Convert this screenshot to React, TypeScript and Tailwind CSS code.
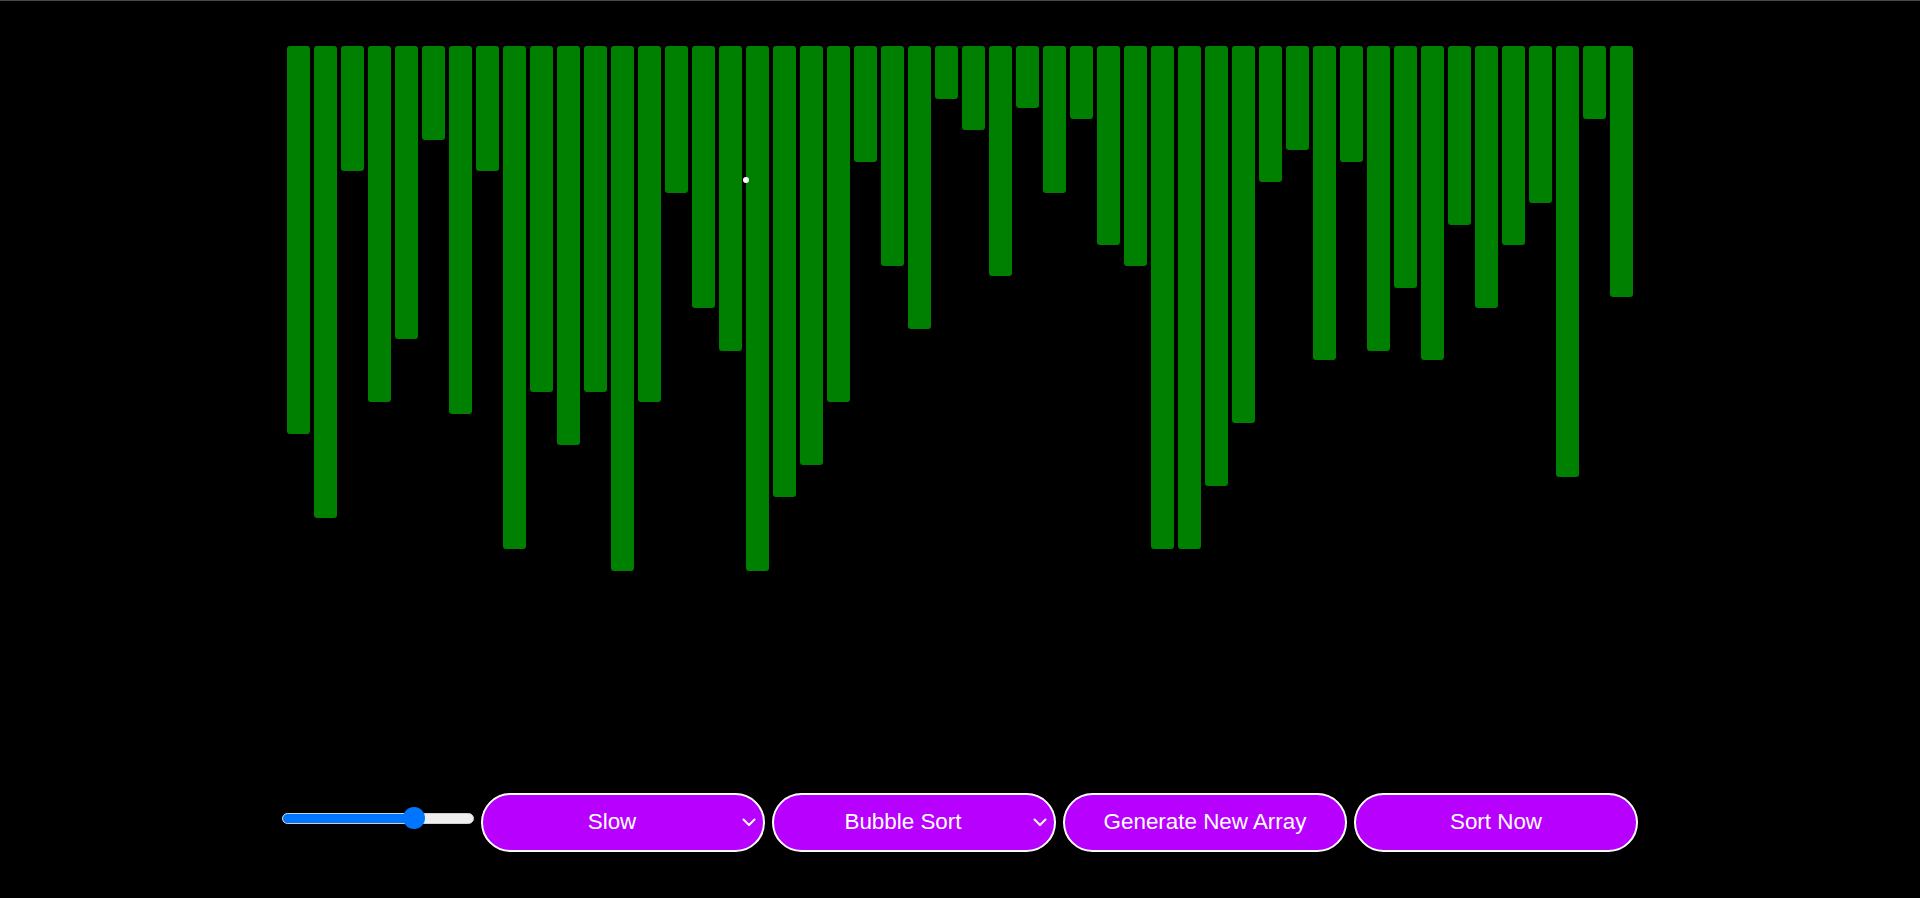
import React from 'react';

const bars = [
  388, 472, 125, 356, 293, 94, 368, 125, 503, 346,
  399, 346, 525, 356, 147, 262, 305, 525, 451, 419,
  356, 116, 220, 283, 53, 84, 230, 62, 147, 73,
  199, 220, 503, 503, 440, 377, 136, 104, 314, 116,
  305, 242, 314, 179, 262, 199, 157, 431, 73, 251,
];

function Chevron() {
  return (
    <svg width="14" height="9" viewBox="0 0 14 9" fill="none" className="shrink-0">
      <polyline points="1.5,1.5 7,7 12.5,1.5" stroke="white" strokeWidth="2" strokeLinecap="round" strokeLinejoin="round" />
    </svg>
  );
}

function SelectPill({ label }: { label: string }) {
  return (
    <div className="w-[284px] h-[59px] rounded-full border-[2.5px] border-white bg-[#b800ff] flex items-center text-white text-[22.4px] leading-none">
      <span className="flex-1 text-center">{label}</span>
      <span className="mr-[7px] w-[15px] flex justify-center">
        <Chevron />
      </span>
    </div>
  );
}

function ActionPill({ label }: { label: string }) {
  return (
    <button className="w-[284px] h-[59px] rounded-full border-[2.5px] border-white bg-[#b800ff] flex items-center justify-center text-white text-[22.4px] leading-none">
      {label}
    </button>
  );
}

export default function App() {
  return (
    <div
      className="min-h-screen bg-black border-t border-[#4a4a4a] relative"
      style={{ fontFamily: '"Liberation Sans", Arial, sans-serif' }}
    >
      {/* Bars */}
      <div className="h-[792px] pt-[45px] flex justify-center items-start">
        {bars.map((h, i) => (
          <div
            key={i}
            className="w-[23px] mx-[2px] rounded-[3px] bg-[#008000]"
            style={{ height: h }}
          />
        ))}
      </div>

      {/* Controls */}
      <div className="h-[59px] flex justify-center items-center gap-[7px]">
        <div className="relative w-[192px] h-[24px] mb-[9px] flex items-center">
          <div className="w-full h-[11px] rounded-full bg-[#efefef] border border-[#cfcfcf] overflow-hidden">
            <div className="w-[132px] h-full bg-[#0075ff]" />
          </div>
          <div className="absolute left-[121px] top-[1px] w-[22px] h-[22px] rounded-full bg-[#0075ff]" />
        </div>
        <SelectPill label="Slow" />
        <SelectPill label="Bubble Sort" />
        <ActionPill label="Generate New Array" />
        <ActionPill label="Sort Now" />
      </div>

      {/* cursor dot */}
      <div className="absolute left-[743px] top-[176px] w-[6px] h-[6px] rounded-full bg-white" />
    </div>
  );
}
